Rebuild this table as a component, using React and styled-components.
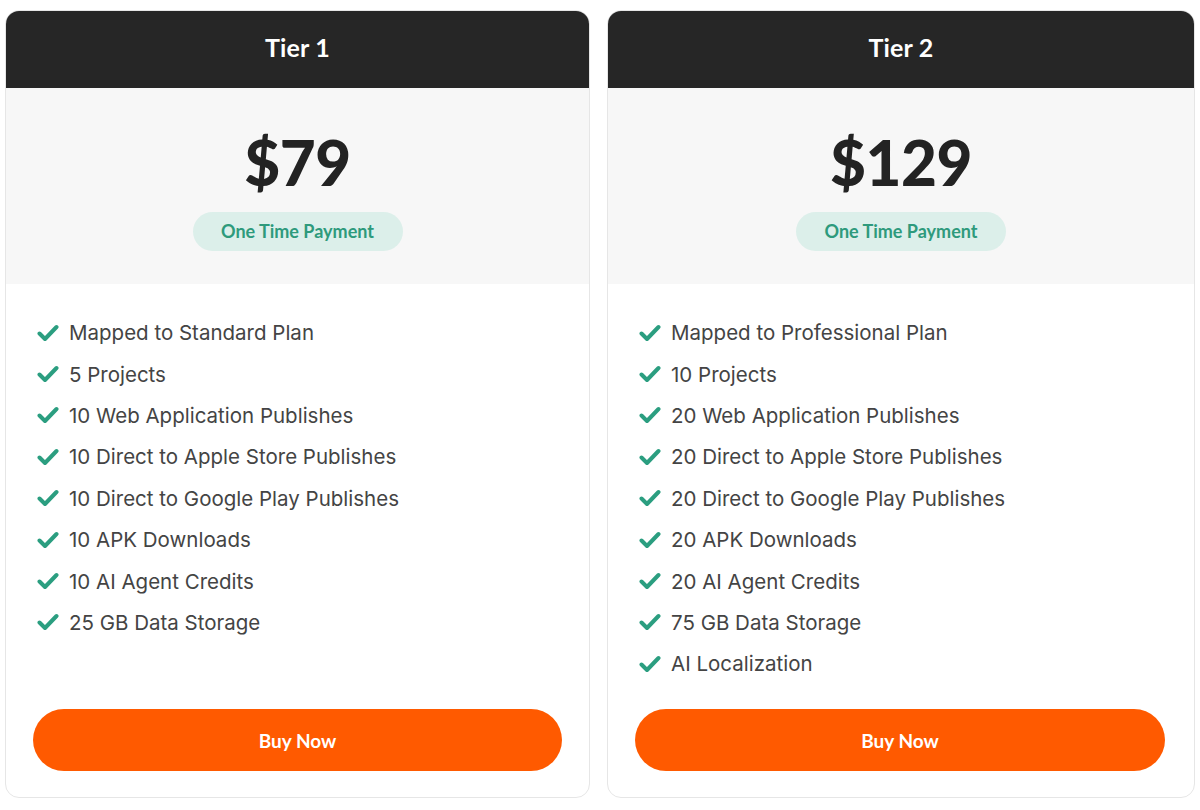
import React from 'react';
import styled, { createGlobalStyle } from 'styled-components';

const GlobalStyle = createGlobalStyle`
  body {
    margin: 0;
    background: #ffffff;
    font-family: Inter, "Liberation Sans", sans-serif;
  }
`;

const Grid = styled.div`
  display: grid;
  grid-template-columns: 585px 588px;
  gap: 17px;
  padding: 10px 5px 0;
`;

const Card = styled.div`
  display: flex;
  flex-direction: column;
  height: 788px;
  box-sizing: border-box;
  border: 1px solid #e6e6e6;
  border-radius: 14px;
  overflow: hidden;
  background: #fff;
`;

const Header = styled.div`
  height: 77px;
  box-sizing: border-box;
  padding-bottom: 5px;
  display: flex;
  align-items: center;
  justify-content: center;
  background: #262626;
  color: #fff;
  font-family: Lato, sans-serif;
  font-weight: 700;
  font-size: 25px;
  letter-spacing: 0.2px;
`;

const PricePanel = styled.div`
  height: 196px;
  display: flex;
  flex-direction: column;
  align-items: center;
  background: #f7f7f7;
`;

const Price = styled.div`
  margin-top: 37px;
  font-family: Lato, sans-serif;
  font-weight: 900;
  font-size: 62px;
  line-height: 74px;
  color: #232323;
  letter-spacing: -0.5px;
`;

const Badge = styled.div`
  margin-top: 13px;
  height: 39px;
  width: 210px;
  border-radius: 20px;
  background: #dcefea;
  color: #2e9a7c;
  display: flex;
  align-items: center;
  justify-content: center;
  font-family: Lato, sans-serif;
  font-weight: 700;
  font-size: 18px;
  padding-bottom: 1px;
  box-sizing: border-box;
`;

const Features = styled.ul`
  list-style: none;
  margin: 0;
  padding: 28px 0 0 31px;
  flex: 1;
`;

const Feature = styled.li`
  display: flex;
  align-items: center;
  gap: 10px;
  height: 41.4px;
  font-size: 20.5px;
  color: #444;
`;

const Button = styled.button`
  margin: 0 ${p => p.$right}px 26px 27px;
  height: 62px;
  border: none;
  border-radius: 31px;
  background: #ff5a00;
  color: #fff;
  font-family: Lato, sans-serif;
  font-weight: 700;
  font-size: 19px;
  cursor: pointer;
`;

const Check = () => (
  <svg width="22" height="18" viewBox="0 0 22 18">
    <path d="M2.5 9.5 L8 15 L19.5 3" fill="none" stroke="#2b9e80" strokeWidth="4" strokeLinecap="round" strokeLinejoin="round" />
  </svg>
);

const tiers = [
  {
    name: 'Tier 1',
    price: '$79',
    right: 27,
    features: [
      'Mapped to Standard Plan',
      '5 Projects',
      '10 Web Application Publishes',
      '10 Direct to Apple Store Publishes',
      '10 Direct to Google Play Publishes',
      '10 APK Downloads',
      '10 AI Agent Credits',
      '25 GB Data Storage',
    ],
  },
  {
    name: 'Tier 2',
    price: '$129',
    right: 29,
    features: [
      'Mapped to Professional Plan',
      '10 Projects',
      '20 Web Application Publishes',
      '20 Direct to Apple Store Publishes',
      '20 Direct to Google Play Publishes',
      '20 APK Downloads',
      '20 AI Agent Credits',
      '75 GB Data Storage',
      'AI Localization',
    ],
  },
];

export default function App() {
  return (
    <>
      <GlobalStyle />
      <Grid>
        {tiers.map(t => (
          <Card key={t.name}>
            <Header>{t.name}</Header>
            <PricePanel>
              <Price>{t.price}</Price>
              <Badge>One Time Payment</Badge>
            </PricePanel>
            <Features>
              {t.features.map(f => (
                <Feature key={f}>
                  <Check />
                  {f}
                </Feature>
              ))}
            </Features>
            <Button $right={t.right}>Buy Now</Button>
          </Card>
        ))}
      </Grid>
    </>
  );
}
